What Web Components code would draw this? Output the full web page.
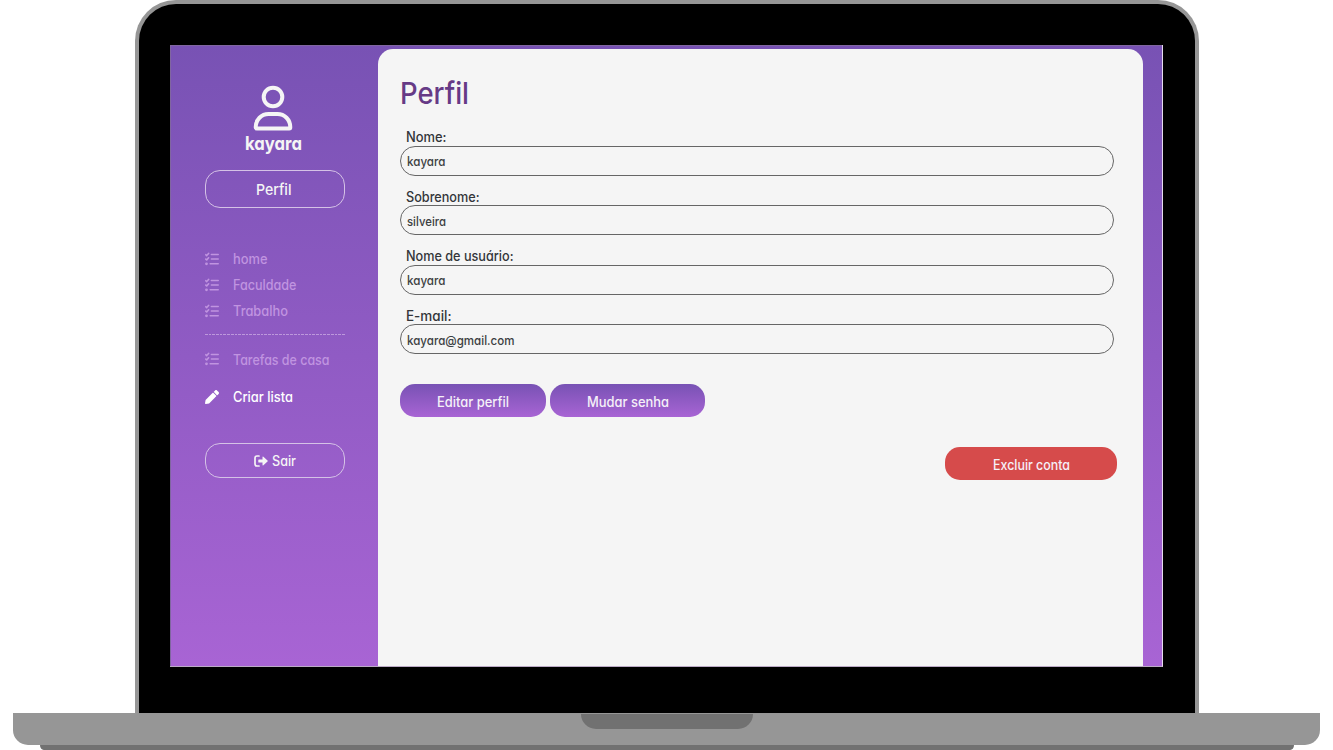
<!DOCTYPE html>
<html lang="pt-BR">
<head>
<meta charset="utf-8">
<title>Perfil</title>
<style>
html,body{margin:0;width:1333px;height:750px;overflow:hidden;background:#fff}
body{font-family:Inter,"Open Sans",sans-serif;font-weight:500;font-feature-settings:"cv11" 1}
</style>
</head>
<body>
<laptop-frame>
  <app-sidebar></app-sidebar>
  <profile-panel></profile-panel>
</laptop-frame>
<script>
const define = (name, html, after) => customElements.define(name, class extends HTMLElement {
  connectedCallback() {
    if (this.shadowRoot) return;
    const t = document.createElement('template');
    t.innerHTML = typeof html === 'function' ? html(this) : html;
    this.attachShadow({mode: 'open'}).appendChild(t.content.cloneNode(true));
    if (after) after(this);
  }
});

// Condenses its text horizontally to the width given in "w".
define('fit-text', el => `<style>
:host{display:block;width:${el.getAttribute('w')}px;flex:none;white-space:nowrap;line-height:1.25}
span{display:inline-block;transform-origin:0 50%}
</style><span><slot></slot></span>`, el => {
  const s = el.shadowRoot.querySelector('span');
  s.style.transform = `scaleX(${+el.getAttribute('w') / s.getBoundingClientRect().width})`;
});

define('laptop-frame', `<style>
:host{display:flex;flex-direction:column;align-items:center;width:1333px;height:750px;background:#fff}
.lid{box-sizing:border-box;width:1064px;margin-left:1px;height:713px;border:4px solid #969696;border-bottom:0;border-radius:41px 41px 0 0;background:#000;padding:41px 0 0 31px;flex:none}
.screen{box-sizing:border-box;width:993px;height:621.5px;display:flex;border-right:1.5px solid #e6dcee;border-bottom:1px solid #bbaac5;background:linear-gradient(#7852b4,#a864d4);box-shadow:inset 1px 1px 0 #8066a0}
.base{width:1307.5px;height:32px;background:#969696;border-radius:0 0 15px 15px;display:flex;justify-content:center;flex:none}
.notch{width:172.5px;height:15px;margin:1px 0 0 1px;background:#717171;border-radius:0 0 15px 15px}
.foot{width:1254px;height:5px;background:#717171;border-radius:0 0 6px 6px/0 0 8px 8px}
</style><div class="lid"><div class="screen"><slot></slot></div></div><div class="base"><div class="notch"></div></div><div class="foot"></div>`);

define('list-link', `<style>
:host{display:flex;align-items:center;height:26px;gap:14px;color:#c094e0;font-size:14px}
svg{width:14px;height:14px;display:block;flex:none;margin-top:-1px}
</style><svg viewBox="0 0 14 14" fill="none" stroke="currentColor" stroke-width="1.6" stroke-linecap="round" stroke-linejoin="round"><path d="M.8 2.7 1.7 3.6 3.6 1.4M.8 7.1 1.7 8 3.6 5.8M6.4 2.5h6.8M6.4 7h6.8M5.2 11.8h8"/><circle cx="1.5" cy="11.8" r=".6" fill="currentColor"/></svg><slot></slot>`);

define('outline-button', `<style>
:host{box-sizing:border-box;display:flex;align-items:center;justify-content:center;width:140px;border:1px solid #d5c2e6;border-radius:15px;color:#f5f5f5}
</style><slot></slot>`);

define('app-sidebar', `<style>
:host{box-sizing:border-box;width:208px;height:100%;padding:40px 33px 0 35px;color:#f5f5f5;display:flex;flex-direction:column}
.user{display:flex;flex-direction:column;align-items:center;width:136px;height:85px;flex:none}
.user svg{width:40px;height:46px;display:block}
.user fit-text{font-size:18.5px;font-weight:700;margin-top:.5px}
.profile{height:38px;font-size:15px;flex:none;padding:2px 3px 0 0}
nav{padding-top:38px}
.sep{height:1px;margin:10px 0 11.5px;width:140px;background:repeating-linear-gradient(90deg,#bd98dc 0 2.7px,transparent 2.7px 3.7px)}
.create{display:flex;align-items:center;gap:14px;height:26px;margin-top:11px;color:#fff;font-size:14px}
.create svg{width:14px;height:14px;display:block}
.exit{height:35px;gap:3.5px;font-size:14px;margin-top:33.5px;flex:none}
.exit svg{width:14px;height:12px;display:block}
</style>
<div class="user">
<svg viewBox="0 0 40 46" fill="none" stroke="#f5f5f5" stroke-width="4"><circle cx="20" cy="12" r="9.3"/><path d="M3.8 43.5H36.2Q37.3 43.5 37.3 42.3C37.3 34.5 31.5 29 24.5 29h-9C8.5 29 2.7 34.5 2.7 42.3Q2.7 43.5 3.8 43.5Z"/></svg>
<fit-text w="57">kayara</fit-text></div>
<outline-button class="profile"><fit-text w="35.5">Perfil</fit-text></outline-button>
<nav>
<list-link><fit-text w="34.5">home</fit-text></list-link>
<list-link><fit-text w="63.5">Faculdade</fit-text></list-link>
<list-link><fit-text w="55">Trabalho</fit-text></list-link>
<div class="sep"></div>
<list-link><fit-text w="96.5">Tarefas de casa</fit-text></list-link>
</nav>
<div class="create"><svg viewBox="0 0 512 512" fill="#fff"><path d="M497.9 142.1l-46.1 46.1c-4.7 4.7-12.3 4.7-17 0l-111-111c-4.7-4.7-4.7-12.3 0-17l46.1-46.1c18.7-18.7 49.1-18.7 67.9 0l60.1 60.1c18.8 18.7 18.8 49.1 0 67.9zM284.2 99.8L21.6 362.4.4 483.9c-2.9 16.4 11.4 30.6 27.8 27.8l121.5-21.3 262.6-262.6c4.7-4.7 4.7-12.3 0-17l-111-111c-4.8-4.7-12.4-4.7-17.1 0z"/></svg><fit-text w="60">Criar lista</fit-text></div>
<outline-button class="exit"><svg viewBox="0 0 14 12"><path d="M5 1H3Q1 1 1 3v6q0 2 2 2h2" fill="none" stroke="#f5f5f5" stroke-width="1.7" stroke-linecap="round"/><path d="M5 4.4h3.5V2.2q0-1 .9-.4L13.5 5.4q.6.6 0 1.2L9.4 10.2q-.9.6-.9-.4V7.6H5Q4.3 7.6 4.3 6.9V5.1Q4.3 4.4 5 4.4Z" fill="#f5f5f5"/></svg><fit-text w="24">Sair</fit-text></outline-button>`);

define('form-field', `<style>
:host{display:block;height:59.5px}
.label{box-sizing:border-box;height:18px;display:flex;align-items:center;padding:2px 0 0 6px;font-size:13.8px;color:#33363a}
.box{box-sizing:border-box;width:713.5px;height:30px;border:1px solid #666;border-radius:15px;display:flex;align-items:center;padding:2.6px 0 0 6px;font-size:12.5px;color:#3c3f42}
</style><div class="label"><slot name="label"></slot></div><div class="box"><slot></slot></div>`);

define('action-button', `<style>
:host{box-sizing:border-box;display:flex;align-items:center;justify-content:center;height:33.5px;padding-top:3.4px;border-radius:15px;color:#f5f0f8;font-size:13.8px;background:linear-gradient(#7852b4,#a864d4)}
:host([danger]){background:#d64b4b}
</style><slot></slot>`);

define('profile-panel', `<style>
:host{box-sizing:border-box;display:block;width:765.4px;height:617px;margin-top:4px;background:#f5f5f5;border-radius:15px 15px 0 0;padding:24px 0 0 22.4px}
.title{font-size:30px;font-weight:540;color:#663a86;height:54.7px;margin:0}
.title fit-text{line-height:41px}
.actions{display:flex;gap:3.7px;margin-top:18px}
.edit{width:146px}.pass{width:155px}
.danger{display:flex;justify-content:flex-end;padding:29.8px 26px 0 0}
.danger action-button{width:172.2px}
</style>
<h1 class="title"><fit-text w="69">Perfil</fit-text></h1>
<form-field><fit-text slot="label" w="40.5">Nome:</fit-text><fit-text w="38.5">kayara</fit-text></form-field>
<form-field><fit-text slot="label" w="73.5">Sobrenome:</fit-text><fit-text w="39">silveira</fit-text></form-field>
<form-field><fit-text slot="label" w="107.5">Nome de usuário:</fit-text><fit-text w="38.5">kayara</fit-text></form-field>
<form-field><fit-text slot="label" w="45.5">E-mail:</fit-text><fit-text w="107.5">kayara@gmail.com</fit-text></form-field>
<div class="actions"><action-button class="edit"><fit-text w="72">Editar perfil</fit-text></action-button><action-button class="pass"><fit-text w="82">Mudar senha</fit-text></action-button></div>
<div class="danger"><action-button danger><fit-text w="77">Excluir conta</fit-text></action-button></div>`);
</script>
</body>
</html>
